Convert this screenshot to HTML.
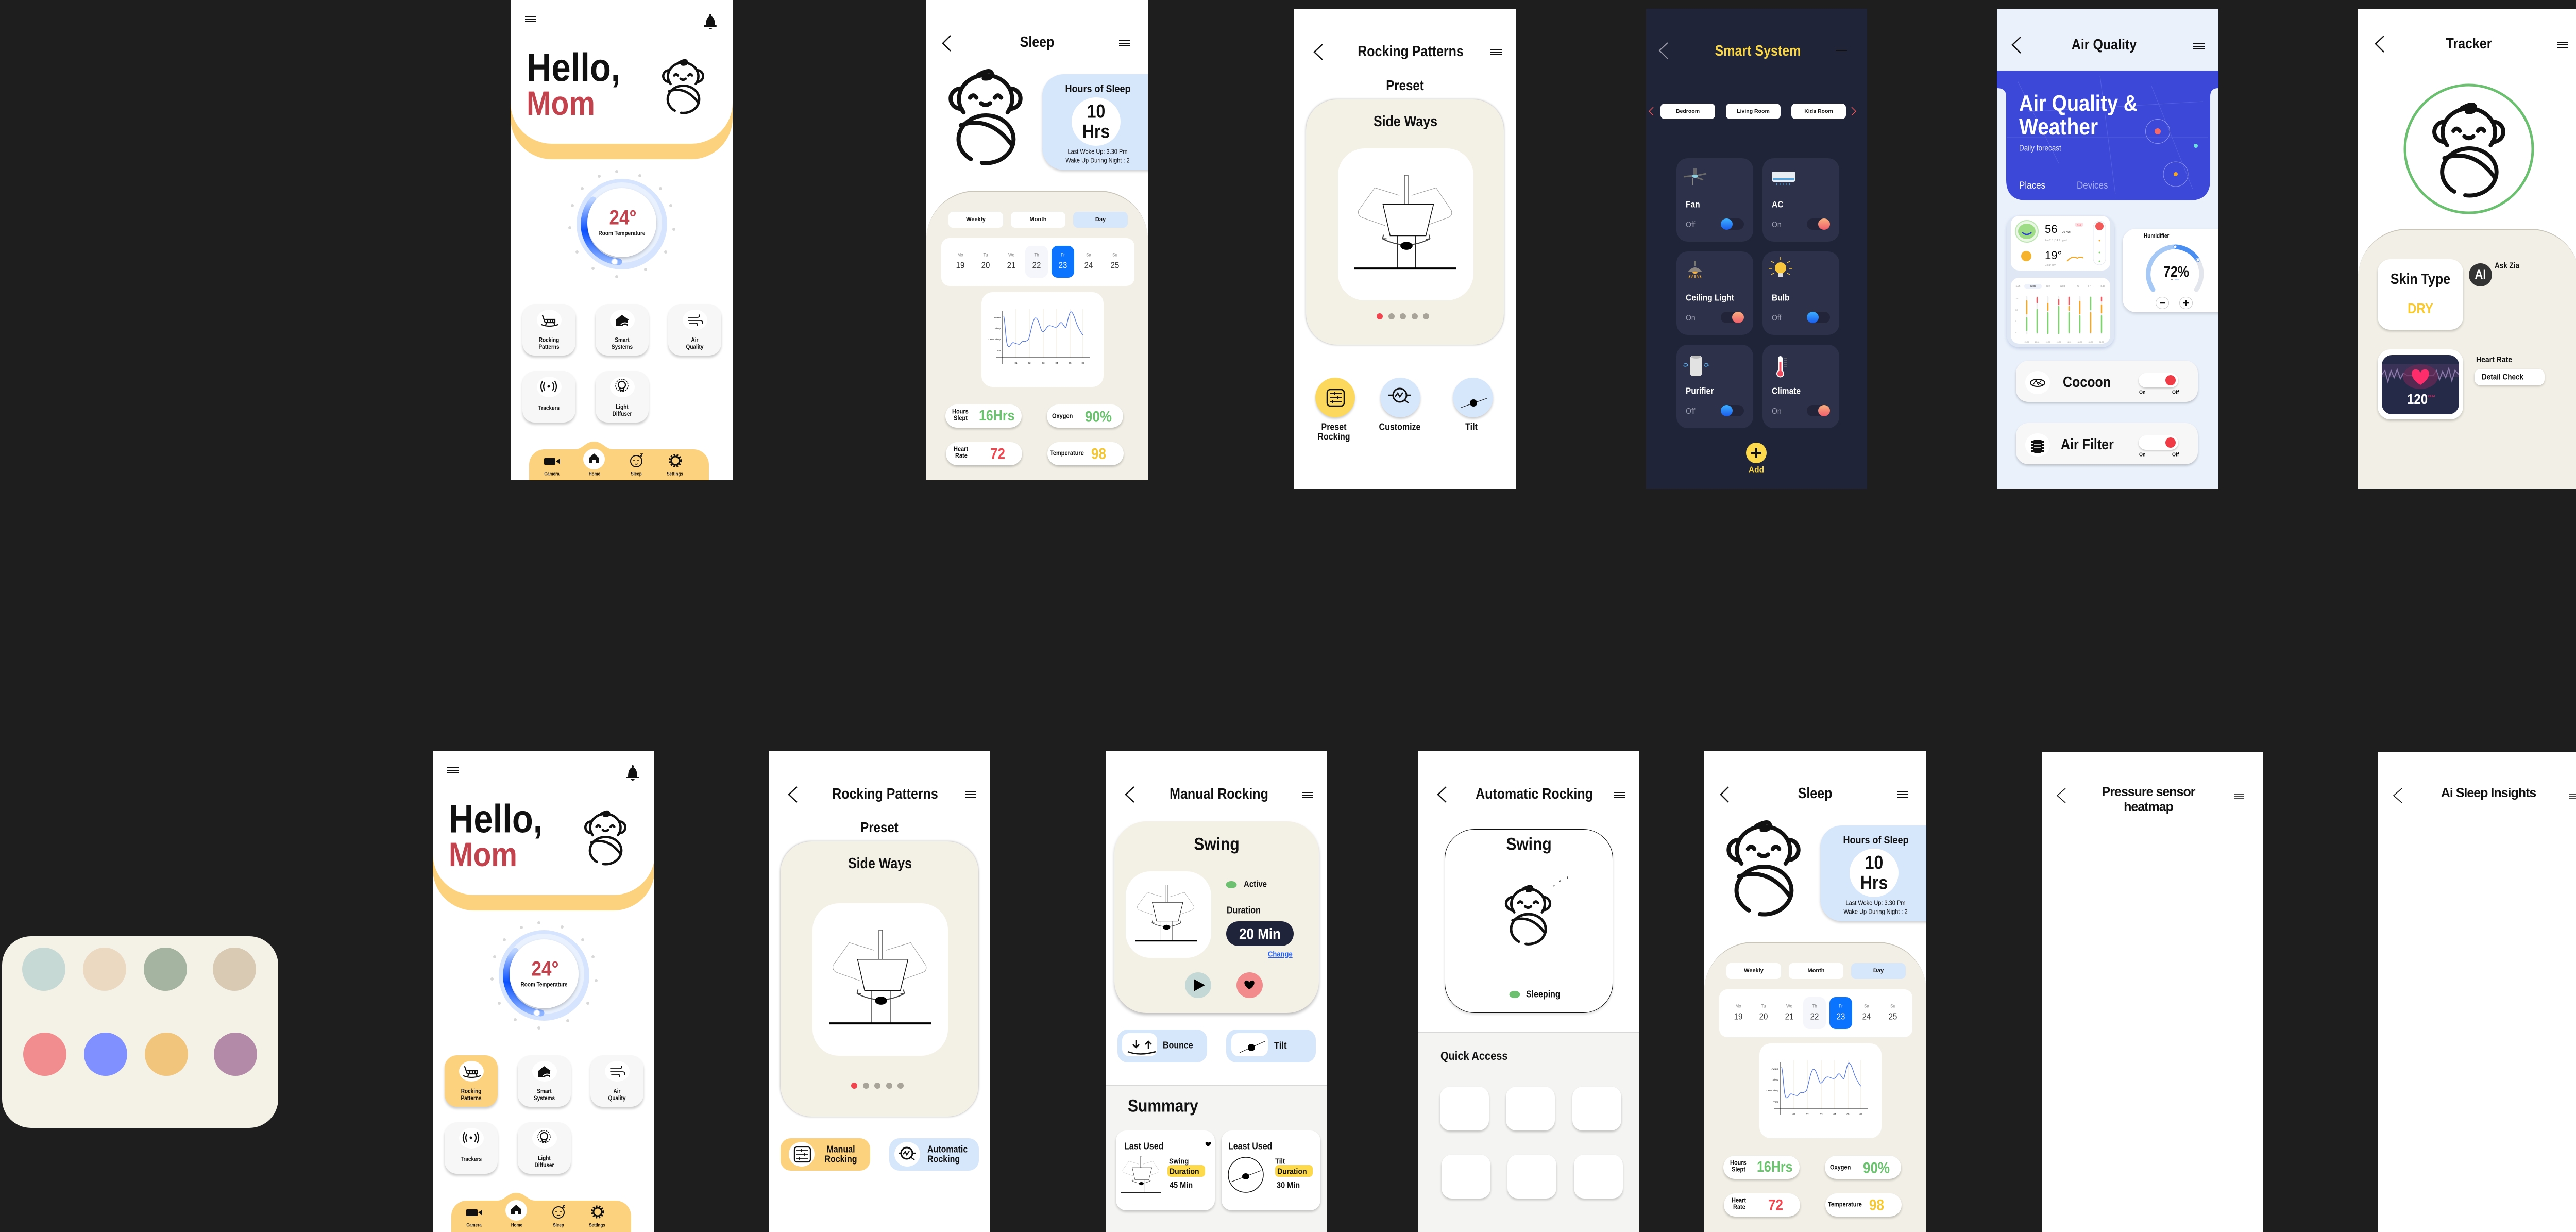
<!DOCTYPE html>
<html><head><meta charset="utf-8"><style>
*{margin:0;padding:0;box-sizing:border-box}
body{width:5046px;height:2391px;background:#1e1e1e;position:relative;overflow:hidden;font-family:"Liberation Sans",Arial,sans-serif;color:#111}
.f{position:absolute;overflow:hidden;background:#fff}
.f div,.f svg{position:absolute}
.t{white-space:nowrap;line-height:1;font-weight:bold;transform:scaleY(1.15)}
.n{font-weight:normal}
.c{text-align:center}
.hm{width:22px;height:12px;border-top:2px solid #111;border-bottom:2px solid #111}
.hm:after{content:"";position:absolute;left:0;right:0;top:3px;border-top:2px solid #111}
.tl{width:103px;height:100px;background:#f7f7f7;border-radius:24px;box-shadow:0 4px 5px rgba(0,0,0,.2)}
.tl:before{content:"";position:absolute;left:28px;top:11px;width:48px;height:40px;border-radius:50%;background:#fff}
.tab{width:106px;height:31px;background:#fff;border-radius:9px;font:bold 11px/31px "Liberation Sans",sans-serif;text-align:center}
.pl{background:#fff;border-radius:24px;box-shadow:0 3px 4px rgba(0,0,0,.22);width:148px;height:45px}
.chip{width:106px;height:30px;background:#fff;border-radius:8px;font:bold 10.5px/30px "Liberation Sans",sans-serif;text-align:center;color:#111}
.cd{width:149px;height:162px;background:#2d3149;border-radius:22px}
.tr{width:45px;height:22px;border-radius:11px;background:#22253a}
.kb{width:23px;height:22px;border-radius:50%;top:0}
.kb.b{background:linear-gradient(180deg,#3cb0ff,#1a5cec)}
.kb.r{background:linear-gradient(180deg,#f9b07f,#ef5d6b)}
.sc{background:#fff;border-radius:20px;box-shadow:0 3px 5px rgba(0,0,0,.2)}
.qa{width:95px;height:85px;background:#fff;border-radius:20px;box-shadow:0 3px 4px rgba(0,0,0,.2)}
</style></head><body>
<svg width="0" height="0" style="position:absolute">
<defs>
<linearGradient id="gb" x1="0" y1="0" x2="0" y2="1"><stop offset="0" stop-color="#bcd4ff"/><stop offset=".5" stop-color="#0a50ff"/><stop offset="1" stop-color="#8fb4ff"/></linearGradient>
<filter id="sh" x="-20%" y="-20%" width="140%" height="150%"><feDropShadow dx="0" dy="3" stdDeviation="3" flood-opacity=".22"/></filter>
<symbol id="baby" viewBox="0 0 100 110"><g fill="none" stroke="#111" stroke-width="4.5" stroke-linecap="round">
<path d="M26 50 A29 26 0 1 1 74 50"/><path d="M22 24 A11 11 0 0 0 24 46"/><path d="M78 24 A11 11 0 0 1 76 46"/>
<path d="M42 9 Q57 1 57 9 Q56 14 48 13"/><path d="M33 34 Q36.5 29 40 34"/><path d="M60 34 Q63.5 29 67 34"/><path d="M45 40 Q50 44 55 40"/>
<path d="M34 101 A30 26 0 1 1 46 105"/><path d="M23 64 Q55 53 79 86"/></g></symbol>
<symbol id="swing" viewBox="0 0 200 190" preserveAspectRatio="none">
<g fill="none" stroke="#999" stroke-width="1"><path d="M88 40 L40 25 L8 70 Q6 80 15 84 L60 100"/><path d="M112 40 L160 25 L190 70 Q193 80 184 84 L140 100"/></g>
<rect x="98" y="0" width="7" height="58" fill="#fff" stroke="#555" stroke-width="1.5"/>
<path d="M56 58 L155 58 L140 120 L70 120 Z" fill="#fff" stroke="#111" stroke-width="1.5"/>
<path d="M84 120 V185 M120 120 V185" stroke="#111" stroke-width="1.5"/>
<path d="M55 126 Q102 150 148 126 M55 126 L57 118 M55 126 L63 126 M148 126 L146 118 M148 126 L140 127" stroke="#444" stroke-width="2" fill="none"/>
<ellipse cx="102" cy="140" rx="12" ry="8" fill="#000"/>
<path d="M0 185 H200" stroke="#000" stroke-width="4"/></symbol>
</defs></svg>

<!-- palette -->
<div style="position:absolute;left:4px;top:1817px;width:536px;height:372px;background:#f4f2e7;border-radius:56px">
<div style="position:absolute;left:39px;top:22px;width:84px;height:84px;border-radius:50%;background:#c6d9d5"></div>
<div style="position:absolute;left:157px;top:22px;width:84px;height:84px;border-radius:50%;background:#ecd9c2"></div>
<div style="position:absolute;left:275px;top:22px;width:84px;height:84px;border-radius:50%;background:#a4b4a0"></div>
<div style="position:absolute;left:409px;top:22px;width:84px;height:84px;border-radius:50%;background:#d9cab4"></div>
<div style="position:absolute;left:41px;top:187px;width:84px;height:84px;border-radius:50%;background:#f18d8e"></div>
<div style="position:absolute;left:159px;top:187px;width:84px;height:84px;border-radius:50%;background:#8090ff"></div>
<div style="position:absolute;left:277px;top:187px;width:84px;height:84px;border-radius:50%;background:#f2c57c"></div>
<div style="position:absolute;left:411px;top:187px;width:84px;height:84px;border-radius:50%;background:#b38ba9"></div>
</div>

<!-- F1 HOME -->
<div class="f" style="left:991px;top:0;width:431px;height:932px">
<div style="left:0;top:0;width:431px;height:309px;background:#fdd27f;border-radius:0 0 80px 80px"></div>
<div style="left:0;top:0;width:431px;height:279px;background:#fff;border-radius:0 0 80px 80px"></div>
<div class="hm" style="left:28px;top:31px"></div>
<div class="tl" style="left:23px;top:590px"></div><div class="tl" style="left:165px;top:590px"></div><div class="tl" style="left:306px;top:590px"></div>
<div class="tl" style="left:23px;top:720px"></div><div class="tl" style="left:165px;top:720px"></div>
<svg width="431" height="932" style="left:0;top:0">
<path d="M379 50 Q379 33 388 31 Q397 33 397 50Z" fill="#111"/><rect x="375" y="49" width="25" height="3" rx="1" fill="#111"/><path d="M384 54 Q388 60 392 54Z" fill="#111"/><rect x="386" y="27" width="4" height="5" rx="2" fill="#111"/>
<use href="#baby" x="283" y="112" width="104" height="112"/>
<circle cx="216" cy="435" r="88" fill="#d6e5fd"/><circle cx="216" cy="432" r="78" fill="#e9f1fe"/>
<path d="M160 388 A73 73 0 0 0 210 508" fill="none" stroke="url(#gb)" stroke-width="13" stroke-linecap="round"/>
<circle cx="216" cy="432" r="67" fill="#fff" filter="url(#sh)"/>
<circle cx="202" cy="508" r="6" fill="#fff" stroke="#bcd2fb" stroke-width="1.5"/>
<g fill="#d8d8d8"><circle cx="206" cy="333" r="3"/><circle cx="251" cy="341" r="3"/><circle cx="291" cy="366" r="3"/><circle cx="311" cy="399" r="3"/><circle cx="317" cy="445" r="3"/><circle cx="301" cy="489" r="3"/><circle cx="262" cy="523" r="3"/><circle cx="206" cy="537" r="3"/><circle cx="160" cy="521" r="3"/><circle cx="129" cy="489" r="3"/><circle cx="115" cy="442" r="3"/><circle cx="120" cy="399" r="3"/><circle cx="139" cy="366" r="3"/><circle cx="172" cy="342" r="3"/></g>
<g fill="none" stroke="#111" stroke-width="2.2" stroke-linecap="round">
<path d="M62 612 L67 626 H86 V620 H68 M72 620 V626 M77 620 V626 M82 620 V626 M60 630 Q75 636 92 630 M70 626 L68 631 M84 626 L86 631"/>
<path d="M345 616 H362 Q368 616 366 611 M345 622 H368 Q374 622 372 628 M347 627 H360 Q364 628 362 632" stroke-width="1.8"/>
<path d="M66 743 Q62 750 66 757 M62 740 Q56 750 62 760 M82 743 Q86 750 82 757 M86 740 Q92 750 86 760"/>
<circle cx="216" cy="747" r="7"/><path d="M212 754 L213 758 H219 L220 754"/><circle cx="216" cy="748" r="12" stroke-width="1.5" stroke-dasharray="2 3"/>
</g>
<circle cx="74" cy="750" r="2.5" fill="#111"/>
<path d="M204 621 L216 611 L230 621 L228 621 L228 632 L204 632Z" fill="#111"/><path d="M214 630 Q222 623 230 630 M218 633 Q222 629 226 633" stroke="#fff" stroke-width="2" fill="none"/>
<path d="M66 872 H125 C140 872 145 857 162 857 C179 857 184 872 199 872 H355 A30 30 0 0 1 385 902 V932 H36 V902 A30 30 0 0 1 66 872Z" fill="#fdd27f"/>
<ellipse cx="162" cy="891" rx="21" ry="20" fill="#fff"/>
<rect x="65" y="889" width="22" height="13" rx="2" fill="#111"/><path d="M88 895 L96 890 V901 Z" fill="#111"/>
<path d="M152 889 L162 880 L172 889 V899 H152Z" fill="#111"/><rect x="159" y="892" width="6" height="7" fill="#fff"/>
<circle cx="244" cy="895" r="11" fill="none" stroke="#111" stroke-width="2"/><path d="M238 894 h4 M246 894 h4 M241 900 q3 2 6 0 M252 881 h4 l-4 4 h4" stroke="#111" stroke-width="1.5" fill="none"/>
<circle cx="320" cy="894" r="8" fill="none" stroke="#111" stroke-width="3"/><circle cx="320" cy="894" r="11" fill="none" stroke="#111" stroke-width="3.5" stroke-dasharray="3 3"/>
</svg>
<div class="t" style="left:31px;top:98px;font-size:67px">Hello,</div>
<div class="t" style="left:31px;top:173px;font-size:57px;color:#c1434e">Mom</div>
<div class="t c" style="left:118px;top:405px;width:200px;font-size:35px;color:#c1434e">24°</div>
<div class="t c" style="left:116px;top:449px;width:200px;font-size:10px">Room Temperature</div>
<div class="t c" style="left:23px;top:656px;width:103px;font-size:10px;line-height:12px">Rocking<br>Patterns</div>
<div class="t c" style="left:165px;top:656px;width:103px;font-size:10px;line-height:12px">Smart<br>Systems</div>
<div class="t c" style="left:306px;top:656px;width:103px;font-size:10px;line-height:12px">Air<br>Quality</div>
<div class="t c" style="left:23px;top:788px;width:103px;font-size:10px">Trackers</div>
<div class="t c" style="left:165px;top:786px;width:103px;font-size:10px;line-height:12px">Light<br>Diffuser</div>
<div class="t c" style="left:50px;top:916px;width:60px;font-size:8px">Camera</div>
<div class="t c" style="left:133px;top:916px;width:60px;font-size:8px">Home</div>
<div class="t c" style="left:214px;top:916px;width:60px;font-size:8px">Sleep</div>
<div class="t c" style="left:289px;top:916px;width:60px;font-size:8px">Settings</div>
</div>

<!-- F7 HOME bottom -->
<div class="f" style="left:840px;top:1458px;width:429px;height:933px">
<div style="left:0;top:0;width:431px;height:309px;background:#fdd27f;border-radius:0 0 80px 80px"></div>
<div style="left:0;top:0;width:431px;height:279px;background:#fff;border-radius:0 0 80px 80px"></div>
<div class="hm" style="left:28px;top:31px"></div>
<div class="tl" style="left:23px;top:590px;background:#fdd27f"></div><div class="tl" style="left:165px;top:590px"></div><div class="tl" style="left:306px;top:590px"></div>
<div class="tl" style="left:23px;top:720px"></div><div class="tl" style="left:165px;top:720px"></div>
<svg width="431" height="933" style="left:0;top:0">
<path d="M379 50 Q379 33 388 31 Q397 33 397 50Z" fill="#111"/><rect x="375" y="49" width="25" height="3" rx="1" fill="#111"/><path d="M384 54 Q388 60 392 54Z" fill="#111"/><rect x="386" y="27" width="4" height="5" rx="2" fill="#111"/>
<use href="#baby" x="283" y="112" width="104" height="112"/>
<circle cx="216" cy="435" r="88" fill="#d6e5fd"/><circle cx="216" cy="432" r="78" fill="#e9f1fe"/>
<path d="M160 388 A73 73 0 0 0 210 508" fill="none" stroke="url(#gb)" stroke-width="13" stroke-linecap="round"/>
<circle cx="216" cy="432" r="67" fill="#fff" filter="url(#sh)"/>
<circle cx="202" cy="508" r="6" fill="#fff" stroke="#bcd2fb" stroke-width="1.5"/>
<g fill="#d8d8d8"><circle cx="206" cy="333" r="3"/><circle cx="251" cy="341" r="3"/><circle cx="291" cy="366" r="3"/><circle cx="311" cy="399" r="3"/><circle cx="317" cy="445" r="3"/><circle cx="301" cy="489" r="3"/><circle cx="262" cy="523" r="3"/><circle cx="206" cy="537" r="3"/><circle cx="160" cy="521" r="3"/><circle cx="129" cy="489" r="3"/><circle cx="115" cy="442" r="3"/><circle cx="120" cy="399" r="3"/><circle cx="139" cy="366" r="3"/><circle cx="172" cy="342" r="3"/></g>
<g fill="none" stroke="#111" stroke-width="2.2" stroke-linecap="round">
<path d="M62 612 L67 626 H86 V620 H68 M72 620 V626 M77 620 V626 M82 620 V626 M60 630 Q75 636 92 630 M70 626 L68 631 M84 626 L86 631"/>
<path d="M345 616 H362 Q368 616 366 611 M345 622 H368 Q374 622 372 628 M347 627 H360 Q364 628 362 632" stroke-width="1.8"/>
<path d="M66 743 Q62 750 66 757 M62 740 Q56 750 62 760 M82 743 Q86 750 82 757 M86 740 Q92 750 86 760"/>
<circle cx="216" cy="747" r="7"/><path d="M212 754 L213 758 H219 L220 754"/><circle cx="216" cy="748" r="12" stroke-width="1.5" stroke-dasharray="2 3"/>
</g>
<circle cx="74" cy="750" r="2.5" fill="#111"/>
<path d="M204 621 L216 611 L230 621 L228 621 L228 632 L204 632Z" fill="#111"/><path d="M214 630 Q222 623 230 630 M218 633 Q222 629 226 633" stroke="#fff" stroke-width="2" fill="none"/>
<path d="M66 872 H125 C140 872 145 857 162 857 C179 857 184 872 199 872 H355 A30 30 0 0 1 385 902 V933 H36 V902 A30 30 0 0 1 66 872Z" fill="#fdd27f"/>
<ellipse cx="162" cy="891" rx="21" ry="20" fill="#fff"/>
<rect x="65" y="889" width="22" height="13" rx="2" fill="#111"/><path d="M88 895 L96 890 V901 Z" fill="#111"/>
<path d="M152 889 L162 880 L172 889 V899 H152Z" fill="#111"/><rect x="159" y="892" width="6" height="7" fill="#fff"/>
<circle cx="244" cy="895" r="11" fill="none" stroke="#111" stroke-width="2"/><path d="M238 894 h4 M246 894 h4 M241 900 q3 2 6 0 M252 881 h4 l-4 4 h4" stroke="#111" stroke-width="1.5" fill="none"/>
<circle cx="320" cy="894" r="8" fill="none" stroke="#111" stroke-width="3"/><circle cx="320" cy="894" r="11" fill="none" stroke="#111" stroke-width="3.5" stroke-dasharray="3 3"/>
</svg>
<div class="t" style="left:31px;top:98px;font-size:67px">Hello,</div>
<div class="t" style="left:31px;top:173px;font-size:57px;color:#c1434e">Mom</div>
<div class="t c" style="left:118px;top:405px;width:200px;font-size:35px;color:#c1434e">24°</div>
<div class="t c" style="left:116px;top:449px;width:200px;font-size:10px">Room Temperature</div>
<div class="t c" style="left:23px;top:656px;width:103px;font-size:10px;line-height:12px">Rocking<br>Patterns</div>
<div class="t c" style="left:165px;top:656px;width:103px;font-size:10px;line-height:12px">Smart<br>Systems</div>
<div class="t c" style="left:306px;top:656px;width:103px;font-size:10px;line-height:12px">Air<br>Quality</div>
<div class="t c" style="left:23px;top:788px;width:103px;font-size:10px">Trackers</div>
<div class="t c" style="left:165px;top:786px;width:103px;font-size:10px;line-height:12px">Light<br>Diffuser</div>
<div class="t c" style="left:50px;top:916px;width:60px;font-size:8px">Camera</div>
<div class="t c" style="left:133px;top:916px;width:60px;font-size:8px">Home</div>
<div class="t c" style="left:214px;top:916px;width:60px;font-size:8px">Sleep</div>
<div class="t c" style="left:289px;top:916px;width:60px;font-size:8px">Settings</div>
</div>

<!-- F2 SLEEP -->
<div class="f" style="left:1798px;top:0;width:430px;height:932px">
<svg width="430" height="340" style="left:0;top:0"><path d="M47 69 L32 84 L47 99" fill="none" stroke="#111" stroke-width="2.5"/><use href="#baby" x="26" y="122" width="178" height="210"/></svg>
<div class="t c" style="left:0;top:70px;width:430px;font-size:25px">Sleep</div>
<div class="hm" style="left:374px;top:78px"></div>
<div style="left:225px;top:144px;width:215px;height:186px;background:#d6e6fb;border-radius:42px 0 0 42px;box-shadow:0 3px 5px rgba(0,0,0,.18)"></div>
<div class="t c" style="left:233px;top:163px;width:200px;font-size:18px">Hours of Sleep</div>
<div style="left:282px;top:189px;width:95px;height:94px;border-radius:50%;background:#fff"></div>
<div class="t c" style="left:282px;top:200px;width:95px;font-size:32px">10</div>
<div class="t c" style="left:282px;top:239px;width:95px;font-size:32px">Hrs</div>
<div class="t c n" style="left:225px;top:290px;width:215px;font-size:11px">Last Woke Up: 3.30 Pm</div>
<div class="t c n" style="left:225px;top:307px;width:215px;font-size:11px">Wake Up During Night : 2</div>
<div style="left:0;top:370px;width:430px;height:600px;background:#f2f0e6;border-radius:95px 95px 0 0;border-top:2px solid #c9c5bb"></div>
<div class="tab" style="left:43px;top:411px">Weekly</div><div class="tab" style="left:164px;top:411px">Month</div><div class="tab" style="left:285px;top:411px;background:#d6e6fb">Day</div>
<div style="left:29px;top:462px;width:375px;height:93px;background:#fff;border-radius:16px"></div>
<div style="left:192px;top:477px;width:44px;height:62px;background:#f4f6fc;border-radius:12px"></div>
<div style="left:243px;top:477px;width:44px;height:62px;background:#0a74ff;border-radius:12px"></div>
<div class="t c n" style="left:46px;top:491px;width:40px;font-size:8px;color:#888">Mo</div><div class="t c n" style="left:46px;top:508px;width:40px;font-size:15px;color:#333">19</div>
<div class="t c n" style="left:95px;top:491px;width:40px;font-size:8px;color:#888">Tu</div><div class="t c n" style="left:95px;top:508px;width:40px;font-size:15px;color:#333">20</div>
<div class="t c n" style="left:145px;top:491px;width:40px;font-size:8px;color:#888">We</div><div class="t c n" style="left:145px;top:508px;width:40px;font-size:15px;color:#333">21</div>
<div class="t c n" style="left:194px;top:491px;width:40px;font-size:8px;color:#888">Th</div><div class="t c n" style="left:194px;top:508px;width:40px;font-size:15px;color:#333">22</div>
<div class="t c n" style="left:245px;top:491px;width:40px;font-size:8px;color:#cfe2ff">Fr</div><div class="t c n" style="left:245px;top:508px;width:40px;font-size:15px;color:#fff">23</div>
<div class="t c n" style="left:295px;top:491px;width:40px;font-size:8px;color:#888">Sa</div><div class="t c n" style="left:295px;top:508px;width:40px;font-size:15px;color:#333">24</div>
<div class="t c n" style="left:346px;top:491px;width:40px;font-size:8px;color:#888">Su</div><div class="t c n" style="left:346px;top:508px;width:40px;font-size:15px;color:#333">25</div>
<div style="left:107px;top:567px;width:237px;height:184px;background:#fff;border-radius:22px"></div>
<svg width="430" height="760" style="left:0;top:0" font-family="Liberation Sans" font-size="4.5">
<g stroke="#ece8d8" stroke-width="1"><path d="M174 600 V694 M200 600 V694 M227 600 V694 M253 600 V694 M279 600 V694 M304 600 V694"/></g>
<path d="M148 604 V706 M135 694 H318" stroke="#111" stroke-width="1"/>
<g text-anchor="end"><text x="144" y="618">Awake</text><text x="144" y="639">Sleep</text><text x="144" y="660">Deep Sleep</text><text x="144" y="682">Time</text></g>
<g text-anchor="middle"><text x="174" y="706">01</text><text x="200" y="706">02</text><text x="227" y="706">03</text><text x="253" y="706">04</text><text x="279" y="706">05</text><text x="304" y="706">06</text></g>
<path d="M150 613 C153 620 154 665 158 671 S165 664 169 665 S178 669 181 668 S186 660 188 662 S195 662 198 659 S206 618 212 617 S222 644 226 644 S234 632 239 632 S248 636 252 635 S259 625 262 626 S269 638 271 635 S277 604 281 605 S289 620 291 626 S300 646 304 650" fill="none" stroke="#5577dd" stroke-width="1.3"/>
</svg>
<div class="pl" style="left:37px;top:785px"></div><div class="pl" style="left:234px;top:785px"></div><div class="pl" style="left:38px;top:858px"></div><div class="pl" style="left:235px;top:858px"></div>
<div class="t" style="left:50px;top:794px;font-size:11px">Hours</div><div class="t" style="left:53px;top:807px;font-size:11px">Slept</div>
<div class="t" style="left:102px;top:795px;font-size:25px;color:#6cc36f">16Hrs</div>
<div class="t" style="left:244px;top:803px;font-size:11px">Oxygen</div><div class="t" style="left:308px;top:795px;font-size:26px;color:#6cc36f">90%</div>
<div class="t" style="left:53px;top:867px;font-size:11px">Heart</div><div class="t" style="left:56px;top:880px;font-size:11px">Rate</div>
<div class="t" style="left:124px;top:867px;font-size:26px;color:#f0464f">72</div>
<div class="t" style="left:240px;top:875px;font-size:11px">Temperature</div><div class="t" style="left:320px;top:867px;font-size:26px;color:#f5c833">98</div>
</div>

<!-- F11 SLEEP bottom -->
<div class="f" style="left:3308px;top:1458px;width:431px;height:933px">
<svg width="430" height="340" style="left:0;top:0"><path d="M47 69 L32 84 L47 99" fill="none" stroke="#111" stroke-width="2.5"/><use href="#baby" x="26" y="122" width="178" height="210"/></svg>
<div class="t c" style="left:0;top:70px;width:430px;font-size:25px">Sleep</div>
<div class="hm" style="left:374px;top:78px"></div>
<div style="left:225px;top:144px;width:215px;height:186px;background:#d6e6fb;border-radius:42px 0 0 42px;box-shadow:0 3px 5px rgba(0,0,0,.18)"></div>
<div class="t c" style="left:233px;top:163px;width:200px;font-size:18px">Hours of Sleep</div>
<div style="left:282px;top:189px;width:95px;height:94px;border-radius:50%;background:#fff"></div>
<div class="t c" style="left:282px;top:200px;width:95px;font-size:32px">10</div>
<div class="t c" style="left:282px;top:239px;width:95px;font-size:32px">Hrs</div>
<div class="t c n" style="left:225px;top:290px;width:215px;font-size:11px">Last Woke Up: 3.30 Pm</div>
<div class="t c n" style="left:225px;top:307px;width:215px;font-size:11px">Wake Up During Night : 2</div>
<div style="left:0;top:370px;width:431px;height:600px;background:#f2f0e6;border-radius:95px 95px 0 0;border-top:2px solid #c9c5bb"></div>
<div class="tab" style="left:43px;top:411px">Weekly</div><div class="tab" style="left:164px;top:411px">Month</div><div class="tab" style="left:285px;top:411px;background:#d6e6fb">Day</div>
<div style="left:29px;top:462px;width:375px;height:93px;background:#fff;border-radius:16px"></div>
<div style="left:192px;top:477px;width:44px;height:62px;background:#f4f6fc;border-radius:12px"></div>
<div style="left:243px;top:477px;width:44px;height:62px;background:#0a74ff;border-radius:12px"></div>
<div class="t c n" style="left:46px;top:491px;width:40px;font-size:8px;color:#888">Mo</div><div class="t c n" style="left:46px;top:508px;width:40px;font-size:15px;color:#333">19</div>
<div class="t c n" style="left:95px;top:491px;width:40px;font-size:8px;color:#888">Tu</div><div class="t c n" style="left:95px;top:508px;width:40px;font-size:15px;color:#333">20</div>
<div class="t c n" style="left:145px;top:491px;width:40px;font-size:8px;color:#888">We</div><div class="t c n" style="left:145px;top:508px;width:40px;font-size:15px;color:#333">21</div>
<div class="t c n" style="left:194px;top:491px;width:40px;font-size:8px;color:#888">Th</div><div class="t c n" style="left:194px;top:508px;width:40px;font-size:15px;color:#333">22</div>
<div class="t c n" style="left:245px;top:491px;width:40px;font-size:8px;color:#cfe2ff">Fr</div><div class="t c n" style="left:245px;top:508px;width:40px;font-size:15px;color:#fff">23</div>
<div class="t c n" style="left:295px;top:491px;width:40px;font-size:8px;color:#888">Sa</div><div class="t c n" style="left:295px;top:508px;width:40px;font-size:15px;color:#333">24</div>
<div class="t c n" style="left:346px;top:491px;width:40px;font-size:8px;color:#888">Su</div><div class="t c n" style="left:346px;top:508px;width:40px;font-size:15px;color:#333">25</div>
<div style="left:107px;top:567px;width:237px;height:184px;background:#fff;border-radius:22px"></div>
<svg width="430" height="760" style="left:0;top:0" font-family="Liberation Sans" font-size="4.5">
<g stroke="#ece8d8" stroke-width="1"><path d="M174 600 V694 M200 600 V694 M227 600 V694 M253 600 V694 M279 600 V694 M304 600 V694"/></g>
<path d="M148 604 V706 M135 694 H318" stroke="#111" stroke-width="1"/>
<g text-anchor="end"><text x="144" y="618">Awake</text><text x="144" y="639">Sleep</text><text x="144" y="660">Deep Sleep</text><text x="144" y="682">Time</text></g>
<g text-anchor="middle"><text x="174" y="706">01</text><text x="200" y="706">02</text><text x="227" y="706">03</text><text x="253" y="706">04</text><text x="279" y="706">05</text><text x="304" y="706">06</text></g>
<path d="M150 613 C153 620 154 665 158 671 S165 664 169 665 S178 669 181 668 S186 660 188 662 S195 662 198 659 S206 618 212 617 S222 644 226 644 S234 632 239 632 S248 636 252 635 S259 625 262 626 S269 638 271 635 S277 604 281 605 S289 620 291 626 S300 646 304 650" fill="none" stroke="#5577dd" stroke-width="1.3"/>
</svg>
<div class="pl" style="left:37px;top:785px"></div><div class="pl" style="left:234px;top:785px"></div><div class="pl" style="left:38px;top:858px"></div><div class="pl" style="left:235px;top:858px"></div>
<div class="t" style="left:50px;top:794px;font-size:11px">Hours</div><div class="t" style="left:53px;top:807px;font-size:11px">Slept</div>
<div class="t" style="left:102px;top:795px;font-size:25px;color:#6cc36f">16Hrs</div>
<div class="t" style="left:244px;top:803px;font-size:11px">Oxygen</div><div class="t" style="left:308px;top:795px;font-size:26px;color:#6cc36f">90%</div>
<div class="t" style="left:53px;top:867px;font-size:11px">Heart</div><div class="t" style="left:56px;top:880px;font-size:11px">Rate</div>
<div class="t" style="left:124px;top:867px;font-size:26px;color:#f0464f">72</div>
<div class="t" style="left:240px;top:875px;font-size:11px">Temperature</div><div class="t" style="left:320px;top:867px;font-size:26px;color:#f5c833">98</div>
</div>

<!-- F3 ROCKING top -->
<div class="f" style="left:2512px;top:17px;width:430px;height:932px">
<div class="t c" style="left:0;top:71px;width:452px;font-size:25px">Rocking Patterns</div>
<div class="hm" style="left:381px;top:78px"></div>
<div class="t c" style="left:0;top:138px;width:430px;font-size:24px">Preset</div>
<div style="left:23px;top:176px;width:384px;height:476px;background:#f3f0e5;border-radius:60px;box-shadow:0 0 4px rgba(0,0,0,.35)"></div>
<div class="t c" style="left:0;top:207px;width:432px;font-size:25px">Side Ways</div>
<div style="left:85px;top:271px;width:263px;height:295px;background:#fff;border-radius:52px"></div>
<div style="left:41px;top:716px;width:77px;height:77px;border-radius:50%;background:#fcd95c;box-shadow:0 3px 4px rgba(0,0,0,.2)"></div>
<div style="left:167px;top:716px;width:78px;height:77px;border-radius:50%;background:#d6e6fb;box-shadow:0 3px 4px rgba(0,0,0,.2)"></div>
<div style="left:308px;top:716px;width:78px;height:77px;border-radius:50%;background:#d6e6fb;box-shadow:0 3px 4px rgba(0,0,0,.2)"></div>
<svg width="430" height="932" style="left:0;top:0">
<path d="M55 69 L39 84 L55 99" fill="none" stroke="#111" stroke-width="2.5"/>
<use href="#swing" x="117" y="323" width="198" height="186"/>
<circle cx="166" cy="597" r="6" fill="#f0444f"/><circle cx="189" cy="597" r="6" fill="#a9a49a"/><circle cx="211" cy="597" r="6" fill="#a9a49a"/><circle cx="234" cy="597" r="6" fill="#a9a49a"/><circle cx="256" cy="597" r="6" fill="#a9a49a"/>
<g fill="none" stroke="#111" stroke-width="2.5"><rect x="64" y="739" width="33" height="32" rx="6"/><path d="M69 747 H92 M69 755 H92 M69 763 H92 M78 744 V750 M85 752 V758 M75 760 V766" stroke-width="2"/>
<circle cx="205" cy="750" r="13" stroke-width="3"/><path d="M196 753 L201 746 L205 753 L211 745 M183 750 H192 M218 750 H227 M214 759 L222 765"/></g>
<path d="M324 774 L374 756" stroke="#111" stroke-width="1"/><circle cx="348" cy="765" r="7" fill="#000"/>
</svg>
<div class="t c" style="left:30px;top:805px;width:94px;font-size:16px">Preset</div>
<div class="t c" style="left:30px;top:824px;width:94px;font-size:16px">Rocking</div>
<div class="t c" style="left:155px;top:805px;width:100px;font-size:16px">Customize</div>
<div class="t c" style="left:300px;top:805px;width:88px;font-size:16px">Tilt</div>
</div>

<!-- F8 ROCKING bottom -->
<div class="f" style="left:1492px;top:1458px;width:430px;height:933px">
<div class="t c" style="left:0;top:71px;width:452px;font-size:25px">Rocking Patterns</div>
<div class="hm" style="left:381px;top:78px"></div>
<div class="t c" style="left:0;top:137px;width:430px;font-size:24px">Preset</div>
<div style="left:23px;top:175px;width:384px;height:534px;background:#f3f0e5;border-radius:60px;box-shadow:0 0 4px rgba(0,0,0,.35)"></div>
<div class="t c" style="left:0;top:206px;width:432px;font-size:25px">Side Ways</div>
<div style="left:85px;top:295px;width:263px;height:296px;background:#fff;border-radius:52px"></div>
<div style="left:23px;top:751px;width:174px;height:63px;border-radius:20px;background:#fdd27f"></div>
<div style="left:234px;top:751px;width:174px;height:63px;border-radius:20px;background:#d6e6fb"></div>
<div style="left:39px;top:758px;width:50px;height:48px;border-radius:50%;background:#fff"></div>
<div style="left:244px;top:758px;width:50px;height:48px;border-radius:50%;background:#fff"></div>
<svg width="430" height="933" style="left:0;top:0">
<path d="M55 69 L39 84 L55 99" fill="none" stroke="#111" stroke-width="2.5"/>
<use href="#swing" x="117" y="347" width="198" height="186"/>
<circle cx="166" cy="649" r="6" fill="#f0444f"/><circle cx="189" cy="649" r="6" fill="#a9a49a"/><circle cx="211" cy="649" r="6" fill="#a9a49a"/><circle cx="234" cy="649" r="6" fill="#a9a49a"/><circle cx="256" cy="649" r="6" fill="#a9a49a"/>
<g fill="none" stroke="#111" stroke-width="2.3"><rect x="50" y="768" width="31" height="29" rx="5"/><path d="M54 775 H77 M54 782 H77 M54 790 H77 M63 772 V778 M70 779 V785 M60 787 V793" stroke-width="1.8"/>
<circle cx="268" cy="780" r="11" stroke-width="3"/><path d="M261 782 L265 777 L268 783 L273 776 M252 780 H258 M279 780 H285 M276 788 L283 793"/></g>
</svg>
<div class="t c" style="left:97px;top:766px;width:86px;font-size:16px">Manual</div>
<div class="t c" style="left:97px;top:785px;width:86px;font-size:16px">Rocking</div>
<div class="t" style="left:308px;top:766px;font-size:16px">Automatic</div>
<div class="t" style="left:308px;top:785px;font-size:16px">Rocking</div>
</div>

<!-- F4 SMART -->
<div class="f" style="left:3195px;top:17px;width:429px;height:932px;background:#1f2438">
<div class="t c" style="left:0;top:70px;width:434px;font-size:25px;color:#f9d548">Smart System</div>
<div class="hm" style="left:368px;top:76px;border-color:#9a9ba8;border-width:1.5px"></div>
<div class="chip" style="left:28px;top:184px">Bedroom</div><div class="chip" style="left:155px;top:184px">Living Room</div><div class="chip" style="left:282px;top:184px">Kids Room</div>
<div class="cd" style="left:59px;top:290px"></div><div class="cd" style="left:226px;top:290px"></div>
<div class="cd" style="left:59px;top:471px"></div><div class="cd" style="left:226px;top:471px"></div>
<div class="cd" style="left:59px;top:652px"></div><div class="cd" style="left:226px;top:652px"></div>
<svg width="429" height="932" style="left:0;top:0">
<path d="M42 66 L26 81 L42 97" fill="none" stroke="#9a9aa8" stroke-width="2"/>
<path d="M14 191 L6 199 L14 207 M399 191 L407 199 L399 207" fill="none" stroke="#e8585c" stroke-width="1.5"/>
<g transform="translate(59,290)"><rect x="33" y="20" width="6" height="12" fill="#666"/><path d="M14 36 L34 34 M38 34 L58 30 M38 37 L52 42" stroke="#6a6a6a" stroke-width="3"/><ellipse cx="36" cy="35" rx="6" ry="3" fill="#8ecfdf"/><line x1="31" y1="38" x2="31" y2="52" stroke="#888" stroke-width="2"/></g>
<g transform="translate(226,290)"><rect x="18" y="26" width="46" height="20" rx="4" fill="#e8ecf3"/><rect x="20" y="39" width="42" height="3" fill="#4aa8e8"/><path d="M28 48 L27 53 M34 48 V53 M40 48 V53 M46 48 V53 M52 48 L53 53" stroke="#4aa8e8" stroke-width="1"/></g>
<g transform="translate(59,471)"><rect x="34" y="18" width="4" height="10" fill="#777"/><path d="M22 40 Q36 22 50 40 Z" fill="#8c8580"/><ellipse cx="36" cy="41" rx="5" ry="2" fill="#f8b33d"/><path d="M24 52 L27 45 M30 52 L31 45 M36 52 V45 M42 52 L41 45 M48 52 L45 45" stroke="#f8b33d" stroke-width="1.5"/></g>
<g transform="translate(226,471)"><circle cx="35" cy="32" r="11" fill="#f8c63d"/><rect x="30" y="42" width="10" height="7" rx="1" fill="#ddd"/><path d="M18 33 H12 M52 33 H58 M22 22 L17 19 M48 22 L53 19 M35 17 V11 M22 42 L17 45 M48 42 L53 45" stroke="#f8c63d" stroke-width="1.5"/></g>
<g transform="translate(59,652)"><rect x="26" y="21" width="24" height="40" rx="7" fill="#e2e2e2"/><ellipse cx="38" cy="24" rx="9" ry="3" fill="#bbb"/><path d="M14 38 Q20 34 22 40 Q16 44 14 40 M54 38 Q60 34 62 40 Q56 44 54 40" fill="none" stroke="#5aa9e6" stroke-width="1.5"/></g>
<g transform="translate(226,652)"><rect x="30" y="22" width="9" height="32" rx="4.5" fill="#fff"/><circle cx="34.5" cy="56" r="7.5" fill="#fff"/><circle cx="34.5" cy="56" r="5.5" fill="#ef4b5f"/><rect x="32.5" y="33" width="4" height="22" fill="#ef4b5f"/><path d="M42 26 H48 M42 30 H48 M42 34 H48 M42 38 H48 M42 42 H48" stroke="#888" stroke-width="1"/></g>
<circle cx="214" cy="862" r="20" fill="#fcd94d"/><path d="M204 862 H224 M214 852 V872" stroke="#111" stroke-width="4"/>
</svg>
<div class="tr" style="left:145px;top:407px"><div class="kb b" style="left:0"></div></div>
<div class="tr" style="left:312px;top:407px"><div class="kb r" style="left:22px"></div></div>
<div class="tr" style="left:145px;top:588px"><div class="kb r" style="left:22px"></div></div>
<div class="tr" style="left:312px;top:588px"><div class="kb b" style="left:0"></div></div>
<div class="tr" style="left:145px;top:769px"><div class="kb b" style="left:0"></div></div>
<div class="tr" style="left:312px;top:769px"><div class="kb r" style="left:22px"></div></div>
<div class="t" style="left:77px;top:373px;font-size:15.5px;color:#fff">Fan</div><div class="t n" style="left:77px;top:411px;font-size:14px;color:#9c9eb1">Off</div>
<div class="t" style="left:244px;top:373px;font-size:15.5px;color:#fff">AC</div><div class="t n" style="left:244px;top:411px;font-size:14px;color:#9c9eb1">On</div>
<div class="t" style="left:77px;top:554px;font-size:15.5px;color:#fff">Ceiling Light</div><div class="t n" style="left:77px;top:592px;font-size:14px;color:#9c9eb1">On</div>
<div class="t" style="left:244px;top:554px;font-size:15.5px;color:#fff">Bulb</div><div class="t n" style="left:244px;top:592px;font-size:14px;color:#9c9eb1">Off</div>
<div class="t" style="left:77px;top:735px;font-size:15.5px;color:#fff">Purifier</div><div class="t n" style="left:77px;top:773px;font-size:14px;color:#9c9eb1">Off</div>
<div class="t" style="left:244px;top:735px;font-size:15.5px;color:#fff">Climate</div><div class="t n" style="left:244px;top:773px;font-size:14px;color:#9c9eb1">On</div>
<div class="t c" style="left:184px;top:888px;width:60px;font-size:15.5px;color:#f9d548">Add</div>
</div>

<!-- F5 AIR -->
<div class="f" style="left:3876px;top:17px;width:430px;height:932px;background:#eaf1fb">
<div class="t c" style="left:0;top:58px;width:416px;font-size:25px">Air Quality</div>
<div class="hm" style="left:381px;top:67px"></div>
<svg width="430" height="932" style="left:0;top:0">
<path d="M46 55 L30 70 L46 86" fill="none" stroke="#111" stroke-width="2.5"/>
<path d="M0 120 H430 V154 Q414 154 414 170 V332 Q414 372 374 372 H58 Q18 372 18 332 V170 Q18 154 0 154 Z" fill="#3c48d8"/>
<g stroke="#5560e0" stroke-width="1" fill="none"><path d="M40 140 L120 300 M200 130 L230 360 M300 150 L380 350 M20 250 H410 M60 200 L400 180"/></g>
<circle cx="312" cy="238" r="23.5" fill="none" stroke="rgba(255,255,255,.4)"/><circle cx="312" cy="238" r="6" fill="#f46a6a"/>
<circle cx="386" cy="266" r="4" fill="#6ee0e0"/>
<circle cx="347" cy="321" r="24" fill="none" stroke="rgba(255,255,255,.4)"/><circle cx="347" cy="321" r="4" fill="#f5a623"/>
</svg>
<div class="t" style="left:43px;top:165px;font-size:38px;color:#fff">Air Quality &amp;</div>
<div class="t" style="left:43px;top:210px;font-size:39px;color:#fff">Weather</div>
<div class="t n" style="left:43px;top:264px;font-size:13.5px;color:#e6e8ff">Daily forecast</div>
<div class="t n" style="left:43px;top:334px;font-size:17px;color:#fff">Places</div>
<div class="t n" style="left:155px;top:334px;font-size:17px;color:#a9b0f0">Devices</div>
<div style="left:19px;top:401px;width:209px;height:256px;background:#dfe7f5;border-radius:24px;box-shadow:0 3px 6px rgba(80,110,170,.25)"></div>
<div style="left:27px;top:402px;width:193px;height:106px;background:#fff;border-radius:16px"></div>
<div style="left:27px;top:522px;width:193px;height:128px;background:#fff;border-radius:16px"></div>
<div style="left:244px;top:427px;width:200px;height:162px;background:#fff;border-radius:26px 0 0 26px;box-shadow:0 3px 6px rgba(0,0,0,.15)"></div>
<svg width="430" height="700" style="left:0;top:0" font-family="Liberation Sans">
<ellipse cx="58" cy="432" rx="22" ry="21" fill="#e9f7e4" stroke="#bde6b2" stroke-width="2"/><ellipse cx="58" cy="432" rx="17" ry="15" fill="#9fdc86"/><path d="M49 434 Q58 442 67 434" stroke="#2b3bd8" stroke-width="2.5" fill="none"/>
<circle cx="57" cy="480" r="10" fill="#f5b32c"/>
<rect x="151" y="415" width="17" height="8" rx="4" fill="#fde0e3"/><text x="159.5" y="421" font-size="5" fill="#f0444f" text-anchor="middle">+16</text>
<rect x="187" y="412" width="24" height="85" rx="12" fill="#fff" stroke="#e6ebf3"/><circle cx="199" cy="422" r="8" fill="#f25a5a"/><circle cx="199" cy="450" r="1.5" fill="#f5a623"/><circle cx="199" cy="473" r="1.5" fill="#7ed36f"/><circle cx="199" cy="490" r="1.5" fill="#7ed36f"/>
<path d="M136 490 Q146 478 156 484 Q163 480 168 484" stroke="#f5a623" stroke-width="2" fill="none"/>
<text x="93" y="435" font-size="22">56</text><text x="126" y="435" font-size="5">US AQI</text><text x="93" y="451" font-size="5" fill="#999">Pm 2.5 | 14.7 ug/m³</text>
<text x="93" y="486" font-size="22">19°</text><text x="93" y="499" font-size="5" fill="#999">Clear sky</text>
<rect x="53" y="534" width="34" height="9" rx="4.5" fill="#eef2fb"/>
<g font-size="5" fill="#999" text-anchor="middle"><text x="41" y="540">Sun</text><text x="70" y="540" fill="#111">Mon</text><text x="99" y="540">Tue</text><text x="127" y="540">Wed</text><text x="156" y="540">Thu</text><text x="180" y="540">Fri</text><text x="205" y="540">Sat</text></g>
<g font-size="4" fill="#999"><text x="36" y="564">150</text><text x="36" y="586">50</text><text x="36" y="608">5</text><text x="36" y="630">0</text></g>
<g stroke-width="2.5" stroke-linecap="round"><g stroke="#eee"><path d="M58 559 V631 M78 559 V631 M99 559 V631 M120 559 V631 M140 559 V631 M161 559 V631 M182 559 V631 M203 559 V631"/></g>
<path d="M58 567 V592 M99 572 V585 M161 568 V592 M182 590 V628 M203 575 V590 M140 578 V585" stroke="#f5a623"/>
<path d="M78 561 V570 M120 565 V574 M140 560 V574 M203 560 V567" stroke="#f0595f"/>
<path d="M58 600 V624 M78 584 V628 M99 590 V630 M120 578 V630 M140 590 V628 M161 596 V628 M182 560 V584 M203 596 V628" stroke="#7ed36f"/></g>
<g font-size="3.5" fill="#999" text-anchor="middle"><text x="58" y="648">23:00</text><text x="78" y="648">19:00</text><text x="99" y="648">15:00</text><text x="120" y="648">13:00</text><text x="140" y="648">11:00</text><text x="161" y="648">08:00</text><text x="182" y="648">03:00</text><text x="203" y="648">01:00</text></g>
<path d="M303 545 A53 53 0 0 1 345 462" fill="none" stroke="#a6c8f5" stroke-width="9" stroke-linecap="round"/>
<path d="M345 462 A53 53 0 0 1 390 488" fill="none" stroke="#4a8df0" stroke-width="9"/>
<path d="M390 488 A53 53 0 0 1 387 545" fill="none" stroke="#e3e6ec" stroke-width="9" stroke-linecap="round"/>
<circle cx="346" cy="462" r="3" fill="#fff" stroke="#4a8df0"/><circle cx="390" cy="488" r="3" fill="#fff" stroke="#4a8df0"/>
<text x="338" y="527" font-size="5" fill="#111">●</text><text x="345" y="527" font-size="4" fill="#4a8df0">45%</text>
<ellipse cx="321" cy="571" rx="12.5" ry="11.5" fill="#fff" stroke="#ccc"/><path d="M316 571 H326" stroke="#111" stroke-width="2.5"/>
<ellipse cx="367" cy="571" rx="12.5" ry="11.5" fill="#fff" stroke="#ccc"/><path d="M362 571 H372 M367 566 V576" stroke="#111" stroke-width="2.5"/>
</svg>
<div class="t" style="left:285px;top:437px;font-size:10px">Humidifier</div>
<div class="t c" style="left:298px;top:499px;width:100px;font-size:25px">72%</div>
<div style="left:37px;top:683px;width:353px;height:80px;background:#f7f7f7;border-radius:24px;box-shadow:0 3px 5px rgba(0,0,0,.2)"></div>
<div style="left:37px;top:804px;width:353px;height:80px;background:#f7f7f7;border-radius:24px;box-shadow:0 3px 5px rgba(0,0,0,.2)"></div>
<div style="left:55px;top:703px;width:48px;height:45px;border-radius:50%;background:#fff"></div>
<div style="left:55px;top:824px;width:48px;height:45px;border-radius:50%;background:#fff"></div>
<div style="left:275px;top:707px;width:77px;height:28px;border-radius:14px;background:#fff;box-shadow:0 2px 3px rgba(0,0,0,.2)"><div style="left:52px;top:4px;width:20px;height:20px;border-radius:50%;background:#ee3b45"></div></div>
<div style="left:275px;top:828px;width:77px;height:28px;border-radius:14px;background:#fff;box-shadow:0 2px 3px rgba(0,0,0,.2)"><div style="left:52px;top:4px;width:20px;height:20px;border-radius:50%;background:#ee3b45"></div></div>
<svg width="430" height="932" style="left:0;top:0">
<ellipse cx="79" cy="726" rx="14" ry="7" fill="none" stroke="#111" stroke-width="2"/><path d="M70 730 L76 721 L80 730 L86 721 M73 722 L89 730" stroke="#111" stroke-width="1.5" fill="none"/>
<path d="M67 840 H91 M66 846 H92 M66 852 H92 M67 858 H91" stroke="#111" stroke-width="4"/><rect x="71" y="836" width="16" height="26" rx="3" fill="#111"/><path d="M72 846 H86 M72 852 H86" stroke="#fff" stroke-width="1.5"/>
</svg>
<div class="t" style="left:128px;top:713px;font-size:25px">Cocoon</div>
<div class="t" style="left:124px;top:834px;font-size:25px">Air Filter</div>
<div class="t" style="left:276px;top:740px;font-size:9px">On</div><div class="t" style="left:340px;top:740px;font-size:9px">Off</div>
<div class="t" style="left:276px;top:861px;font-size:9px">On</div><div class="t" style="left:340px;top:861px;font-size:9px">Off</div>
</div>

<!-- F6 TRACKER -->
<div class="f" style="left:4577px;top:17px;width:430px;height:932px">
<div class="t c" style="left:0;top:56px;width:430px;font-size:25px">Tracker</div>
<div class="hm" style="left:386px;top:64px"></div>
<div style="left:0;top:427px;width:430px;height:600px;background:#f2f0e6;border-radius:95px 95px 0 0;border-top:2px solid #c9c5bb"></div>
<svg width="430" height="430" style="left:0;top:0">
<path d="M50 53 L34 68 L50 84" fill="none" stroke="#111" stroke-width="2.5"/>
<circle cx="215" cy="272" r="124" fill="none" stroke="#6cbf70" stroke-width="5"/>
<use href="#baby" x="127" y="173" width="176" height="202"/>
</svg>
<div style="left:38px;top:486px;width:166px;height:137px;background:#fff;border-radius:25px;box-shadow:0 3px 5px rgba(0,0,0,.2)"></div>
<div class="t c" style="left:38px;top:513px;width:166px;font-size:25px">Skin Type</div>
<div class="t c" style="left:38px;top:571px;width:166px;font-size:24px;color:#f9c92e">DRY</div>
<div style="left:215px;top:494px;width:45px;height:45px;border-radius:50%;background:#333"></div>
<div class="t c" style="left:215px;top:505px;width:45px;font-size:22px;color:#fff">AI</div>
<div class="t" style="left:265px;top:492px;font-size:13.5px">Ask Zia</div>
<div style="left:38px;top:661px;width:166px;height:136px;background:#fff;border-radius:25px;box-shadow:0 3px 5px rgba(0,0,0,.2)"></div>
<div style="left:46px;top:672px;width:150px;height:115px;background:#252a49;border-radius:20px;overflow:hidden">
<svg width="150" height="115" style="left:0;top:0"><rect x="0" y="18" width="150" height="25" fill="#3a3257"/><path d="M0 38 L6 30 L12 52 L18 30 L24 44 L30 28 L36 46 L42 35 L50 40 L100 40 L106 30 L112 48 L118 32 L124 44 L130 26 L136 50 L142 30 L150 38" stroke="#8a7aa8" stroke-width="2" fill="none"/>
<ellipse cx="75" cy="42" rx="34" ry="24" fill="#6a2a55" opacity=".7"/>
<path d="M75 58 C52 44 56 26 67 28 C72 28 75 33 75 35 C75 33 78 28 83 28 C94 26 98 44 75 58Z" fill="#fd2d6c"/></svg></div>
<div class="t" style="left:95px;top:747px;font-size:24px;color:#fff">120</div>
<div class="t n" style="left:136px;top:750px;font-size:6px;color:#fd2d6c">BPM</div>
<div class="t" style="left:229px;top:673px;font-size:14px">Heart Rate</div>
<div style="left:226px;top:699px;width:136px;height:32px;background:#fff;border-radius:12px;box-shadow:0 2px 4px rgba(0,0,0,.2)"></div>
<div class="t" style="left:240px;top:708px;font-size:13.5px">Detail Check</div>
</div>

<!-- F9 MANUAL -->
<div class="f" style="left:2146px;top:1458px;width:430px;height:933px">
<div class="t c" style="left:0;top:71px;width:440px;font-size:25px">Manual Rocking</div>
<div class="hm" style="left:381px;top:79px"></div>
<div style="left:0;top:647px;width:430px;height:300px;background:#f4f4f2;border-top:2px solid #d8d8d8"></div>
<div style="left:17px;top:136px;width:397px;height:372px;background:#f3f0e5;border-radius:62px;box-shadow:0 4px 6px rgba(0,0,0,.25)"></div>
<div style="left:39px;top:233px;width:166px;height:168px;background:#fff;border-radius:48px"></div>
<div style="left:234px;top:330px;width:131px;height:48px;background:#20243b;border-radius:24px"></div>
<div style="left:154px;top:429px;width:51px;height:50px;border-radius:50%;background:#c4d9d5"></div>
<div style="left:254px;top:429px;width:51px;height:50px;border-radius:50%;background:#f28b8b"></div>
<div style="left:23px;top:540px;width:174px;height:64px;background:#d6e6fb;border-radius:20px"></div>
<div style="left:32px;top:547px;width:68px;height:45px;background:#fff;border-radius:14px"></div>
<div style="left:234px;top:540px;width:174px;height:64px;background:#d6e6fb;border-radius:20px"></div>
<div style="left:244px;top:547px;width:71px;height:45px;background:#fff;border-radius:14px"></div>
<div class="sc" style="left:20px;top:736px;width:192px;height:155px"></div>
<div class="sc" style="left:225px;top:736px;width:192px;height:155px"></div>
<div style="left:120px;top:803px;width:73px;height:23px;background:#fdd94c;border-radius:7px"></div>
<div style="left:329px;top:803px;width:73px;height:23px;background:#fdd94c;border-radius:7px"></div>
<svg width="430" height="933" style="left:0;top:0">
<path d="M55 69 L39 84 L55 99" fill="none" stroke="#111" stroke-width="2.5"/>
<use href="#swing" x="57" y="259" width="120" height="112"/>
<ellipse cx="244" cy="259" rx="10.5" ry="7" fill="#6cc070"/>
<polygon points="171,442 193,454 171,466" fill="#000"/>
<path d="M279 462 C266 454 268 444 274 445 C277 445 279 448 279 449 C279 448 281 445 284 445 C290 444 292 454 279 462Z" fill="#000"/>
<path d="M59 561 V575 M53 569 L59 575 L65 569 M83 577 V563 M77 569 L83 563 L89 569 M43 583 Q66 592 97 583" stroke="#111" stroke-width="2.5" fill="none"/>
<path d="M260 585 L309 563" stroke="#111" stroke-width="1"/><circle cx="283" cy="575" r="7" fill="#000"/>
<path d="M199 767 C192 763 193 758 196 758 C198 758 199 760 199 760 C199 760 200 758 202 758 C205 758 206 763 199 767Z" fill="#000"/>
<use href="#swing" x="30" y="786" width="77" height="72"/>
<circle cx="272" cy="822" r="34" fill="none" stroke="#111" stroke-width="1.5"/><path d="M243 836 L301 814" stroke="#111" stroke-width="1"/><ellipse cx="272" cy="825" rx="7" ry="6" fill="#000"/>
</svg>
<div class="t c" style="left:17px;top:166px;width:397px;font-size:30px">Swing</div>
<div class="t" style="left:268px;top:251px;font-size:15px">Active</div>
<div class="t" style="left:235px;top:302px;font-size:16px">Duration</div>
<div class="t c" style="left:234px;top:341px;width:131px;font-size:26px;color:#fff">20 Min</div>
<div class="t" style="left:315px;top:387px;font-size:13px;color:#1a5cff;text-decoration:underline">Change</div>
<div class="t" style="left:111px;top:564px;font-size:16px">Bounce</div>
<div class="t" style="left:327px;top:564px;font-size:16.5px">Tilt</div>
<div class="t" style="left:43px;top:674px;font-size:30px">Summary</div>
<div class="t" style="left:36px;top:760px;font-size:16px">Last Used</div>
<div class="t" style="left:238px;top:760px;font-size:16px">Least Used</div>
<div class="t" style="left:123px;top:789px;font-size:13px">Swing</div>
<div class="t" style="left:329px;top:789px;font-size:13px">Tilt</div>
<div class="t" style="left:124px;top:808px;font-size:14px">Duration</div>
<div class="t" style="left:333px;top:808px;font-size:14px">Duration</div>
<div class="t" style="left:124px;top:836px;font-size:14.5px">45 Min</div>
<div class="t" style="left:332px;top:836px;font-size:14.5px">30 Min</div>
</div>

<!-- F10 AUTO -->
<div class="f" style="left:2752px;top:1458px;width:430px;height:933px">
<div class="t c" style="left:0;top:71px;width:452px;font-size:25px">Automatic Rocking</div>
<div class="hm" style="left:381px;top:79px"></div>
<div style="left:0;top:544px;width:430px;height:400px;background:#f4f4f2;border-top:2px solid #d8d8d8"></div>
<div style="left:52px;top:151px;width:327px;height:357px;background:#fff;border:1.5px solid #111;border-radius:58px;box-shadow:0 3px 5px rgba(0,0,0,.12)"></div>
<svg width="430" height="933" style="left:0;top:0" font-family="Liberation Sans" font-weight="bold" font-size="6">
<path d="M55 69 L39 84 L55 99" fill="none" stroke="#111" stroke-width="2.5"/>
<use href="#baby" x="158" y="254" width="112" height="128"/>
<text x="263" y="264">z</text><text x="274" y="253">z</text><text x="289" y="247">z</text>
<ellipse cx="188" cy="472" rx="10.5" ry="7" fill="#6cc070"/>
</svg>
<div class="t c" style="left:52px;top:166px;width:327px;font-size:30px">Swing</div>
<div class="t" style="left:210px;top:465px;font-size:16px">Sleeping</div>
<div class="t" style="left:44px;top:582px;font-size:20px">Quick Access</div>
<div class="qa" style="left:43px;top:651px"></div><div class="qa" style="left:171px;top:651px"></div><div class="qa" style="left:300px;top:651px"></div>
<div class="qa" style="left:46px;top:783px"></div><div class="qa" style="left:174px;top:783px"></div><div class="qa" style="left:303px;top:783px"></div>
</div>

<!-- F12 PRESSURE -->
<div class="f" style="left:3964px;top:1459px;width:429px;height:932px">
<svg width="429" height="120" style="left:0;top:0"><path d="M45 71 L29 85 L45 99" fill="none" stroke="#111" stroke-width="1.6"/><path d="M373 83 H392 M373 87 H392 M373 91 H392" stroke="#111" stroke-width="1.5"/></svg>
<div style="left:0;top:64px;width:412px;text-align:center;font:bold 25px/29px 'Liberation Sans',sans-serif;letter-spacing:-1px">Pressure sensor<br>heatmap</div>
</div>

<!-- F13 AI -->
<div class="f" style="left:4616px;top:1459px;width:430px;height:932px">
<svg width="430" height="120" style="left:0;top:0"><path d="M46 71 L30 85 L46 99" fill="none" stroke="#111" stroke-width="1.6"/><path d="M371 83 H390 M371 87 H390 M371 91 H390" stroke="#111" stroke-width="1.5"/></svg>
<div style="left:0;top:66px;width:428px;text-align:center;font:bold 25px/29px 'Liberation Sans',sans-serif;letter-spacing:-1px">Ai Sleep Insights</div>
</div>

</body></html>
